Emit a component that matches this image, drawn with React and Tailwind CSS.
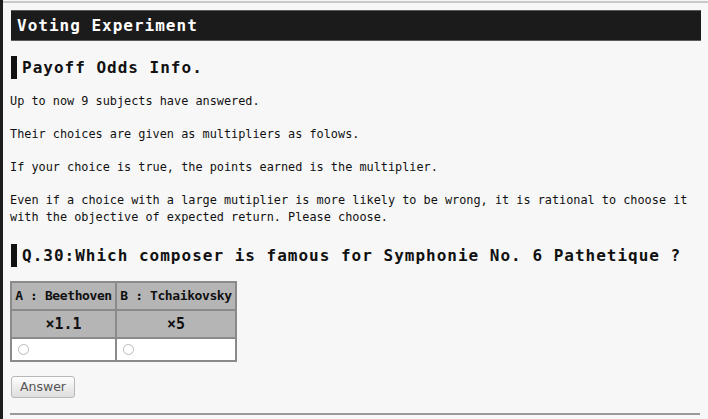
import React from 'react';

const mono = { fontFamily: "'DejaVu Sans Mono', 'Liberation Mono', monospace" };

const paragraphs = [
  'Up to now 9 subjects have answered.',
  'Their choices are given as multipliers as folows.',
  'If your choice is true, the points earned is the multiplier.',
  'Even if a choice with a large mutiplier is more likely to be wrong, it is rational to choose it with the objective of expected return. Please choose.',
];

const choices = [
  { label: 'A : Beethoven', odds: '×1.1', w: 'w-[105px]' },
  { label: 'B : Tchaikovsky', odds: '×5', w: 'w-[120px]' },
];

const Heading = ({ children }) => (
  <div className="flex items-center h-[23px] border-l-[6px] border-[#111] pl-[5px]">
    <h2 className="text-[16px] font-bold tracking-[1px] text-[#111] leading-none" style={mono}>{children}</h2>
  </div>
);

export default function App() {
  return (
    <div className="flex w-[708px] h-[419px] overflow-hidden bg-[#f7f7f7]">
      {/* left window edge */}
      <div className="w-[3px] shrink-0 bg-[#1c1c1c]" />

      <div className="flex-1 flex flex-col mt-[1px] border-t-2 border-[#c8c8c8] pl-[7px] pr-[7px] pt-[7px]" style={mono}>
        {/* Title bar */}
        <div className="ml-[1px] h-[31px] shrink-0 flex items-center bg-[#1b1b1b] border-y border-[#5a5a5a] pl-[6px]">
          <h1 className="text-[16px] font-bold tracking-[1px] text-white leading-none">Voting Experiment</h1>
        </div>

        <div className="mt-[15px] ml-[1px]">
          <Heading>Payoff Odds Info.</Heading>
        </div>

        <div className="mt-[14px] flex flex-col gap-[16px] text-[11.85px] leading-[17px] text-[#111]">
          {paragraphs.map((p, i) => (
            <p key={i}>{p}</p>
          ))}
        </div>

        <div className="mt-[18px] ml-[1px]">
          <Heading>Q.30:Which composer is famous for Symphonie No. 6 Pathetique ?</Heading>
        </div>

        {/* Choices table */}
        <table className="mt-[14px] table-fixed border-collapse border-2 border-[#8a8a8a] w-[225px] text-[#111]">
          <tbody>
            <tr className="bg-[#b5b5b5] h-[28px]">
              {choices.map((c) => (
                <th key={c.label} className={`${c.w} border-2 border-[#8a8a8a] p-0 text-[13px] tracking-[-0.4px] font-bold text-center whitespace-nowrap`}>{c.label}</th>
              ))}
            </tr>
            <tr className="bg-[#b5b5b5] h-[28px]">
              {choices.map((c) => (
                <td key={c.label} className="border-2 border-[#8a8a8a] p-0 text-[15px] font-bold text-center">{c.odds}</td>
              ))}
            </tr>
            <tr className="bg-white h-[23px]">
              {choices.map((c) => (
                <td key={c.label} className="border-2 border-[#8a8a8a] p-0 pl-[6px]">
                  <span className="block w-[11px] h-[11px] rounded-full border border-[#b8b8b8] bg-white" />
                </td>
              ))}
            </tr>
          </tbody>
        </table>

        <div className="mt-[14px] ml-[1px] flex">
          <button
            className="h-[22px] w-[64px] rounded-[3px] border border-[#b8b8b8] bg-gradient-to-b from-[#fdfdfd] to-[#dedede] text-[12.5px] leading-none text-[#555]"
            style={{ fontFamily: "'DejaVu Sans', sans-serif" }}
          >
            Answer
          </button>
        </div>

        <hr className="mt-[15px] mr-[1px] border-0 h-[2px] shrink-0 bg-[#9a9a9a]" />
      </div>
    </div>
  );
}
